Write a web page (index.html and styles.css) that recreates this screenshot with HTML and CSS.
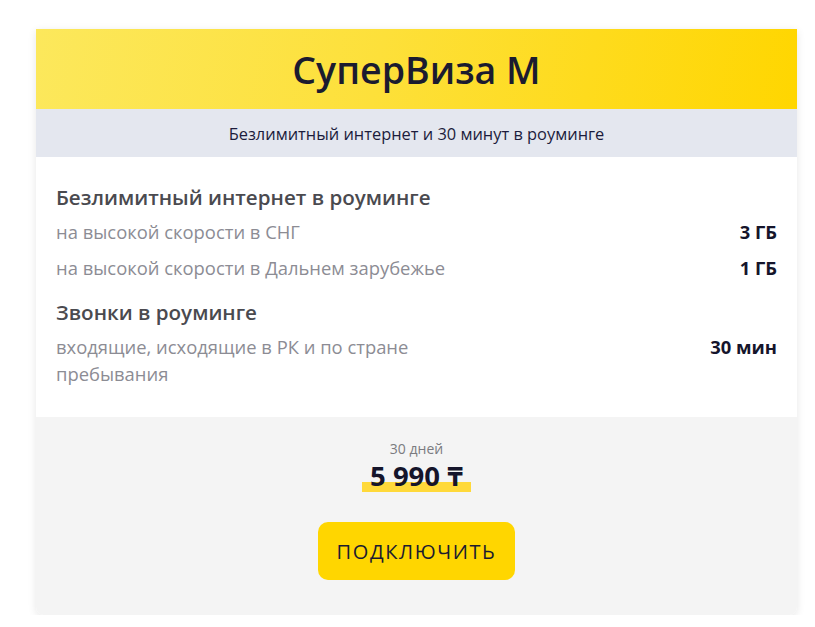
FILE: index.html
```html
<!DOCTYPE html>
<html lang="ru">
<head>
<meta charset="utf-8">
<link rel="stylesheet" href="styles.css">
</head>
<body>
<div class="card">
  <div class="head"><h1 class="title">СуперВиза М</h1></div>
  <div class="sub">Безлимитный интернет и 30 минут в роуминге</div>
  <div class="body">
    <h2 class="sec">Безлимитный интернет в роуминге</h2>
    <div class="row"><span class="lbl">на высокой скорости в СНГ</span><span class="val">3 ГБ</span></div>
    <div class="row"><span class="lbl">на высокой скорости в Дальнем зарубежье</span><span class="val">1 ГБ</span></div>
    <h2 class="sec second">Звонки в роуминге</h2>
    <div class="row"><span class="lbl narrow">входящие, исходящие в РК и по стране пребывания</span><span class="val">30 мин</span></div>
  </div>
  <div class="foot">
    <div class="period">30 дней</div>
    <div class="price"><span class="hl">5 990 ₸</span></div>
    <button class="btn">ПОДКЛЮЧИТЬ</button>
  </div>
</div>
</body>
</html>
```
FILE: styles.css
```css
html, body { margin: 0; padding: 0; background: #fff; }
body { font-family: "Open Sans", "Noto Sans", sans-serif; padding: 29px 18px 0 36px; }
.card {
  width: 761px;
  border-radius: 0 0 8px 8px;
  box-shadow: 0 2px 8px rgba(0,0,0,0.10);
  overflow: hidden;
}
.head {
  height: 80px;
  background: linear-gradient(100deg, #fce85c 0%, #fde03a 45%, #ffd600 100%);
  display: flex; align-items: center; justify-content: center;
}
.title { margin: 0; font-size: 37.5px; font-weight: 600; color: #1b1b2f; }
.sub {
  height: 48px; background: #e4e7ef;
  display: flex; align-items: center; justify-content: center;
  font-size: 16.4px; color: #1c1c3c;
}
.body { background: #fff; padding: 25px 20px 30px 20px; }
.sec { margin: 0 0 6px 0; font-size: 20.6px; font-weight: 600; color: #4a4a4f; line-height: 30px; }
.second { margin-top: 16px; }
.row { display: flex; justify-content: space-between; align-items: flex-start; font-size: 18.4px; line-height: 27px; margin-bottom: 9px; }
.row:last-child { margin-bottom: 0; }
.lbl { color: #8c8c94; }
.narrow { max-width: 380px; }
.val { font-weight: 700; color: #15152b; }
.foot {
  background: #f4f4f4; padding: 23px 0 35px;
  display: flex; flex-direction: column; align-items: center;
}
.period { font-size: 14px; color: #7b7b80; line-height: 18px; }
.price { font-size: 27.5px; font-weight: 700; color: #15152b; line-height: 36px; }
.hl {
  padding: 0 8px;
  background: linear-gradient(to bottom, transparent 0, transparent 68%, #ffd93a 68%, #ffd93a 94%, transparent 94%);
}
.btn {
  margin-top: 28px;
  width: 197px; height: 58px;
  border: 0; border-radius: 10px; background: #ffd600;
  font-family: inherit; font-size: 20px; font-weight: 500; letter-spacing: 1.6px; color: #1b1b2f;
  cursor: pointer;
}
```
